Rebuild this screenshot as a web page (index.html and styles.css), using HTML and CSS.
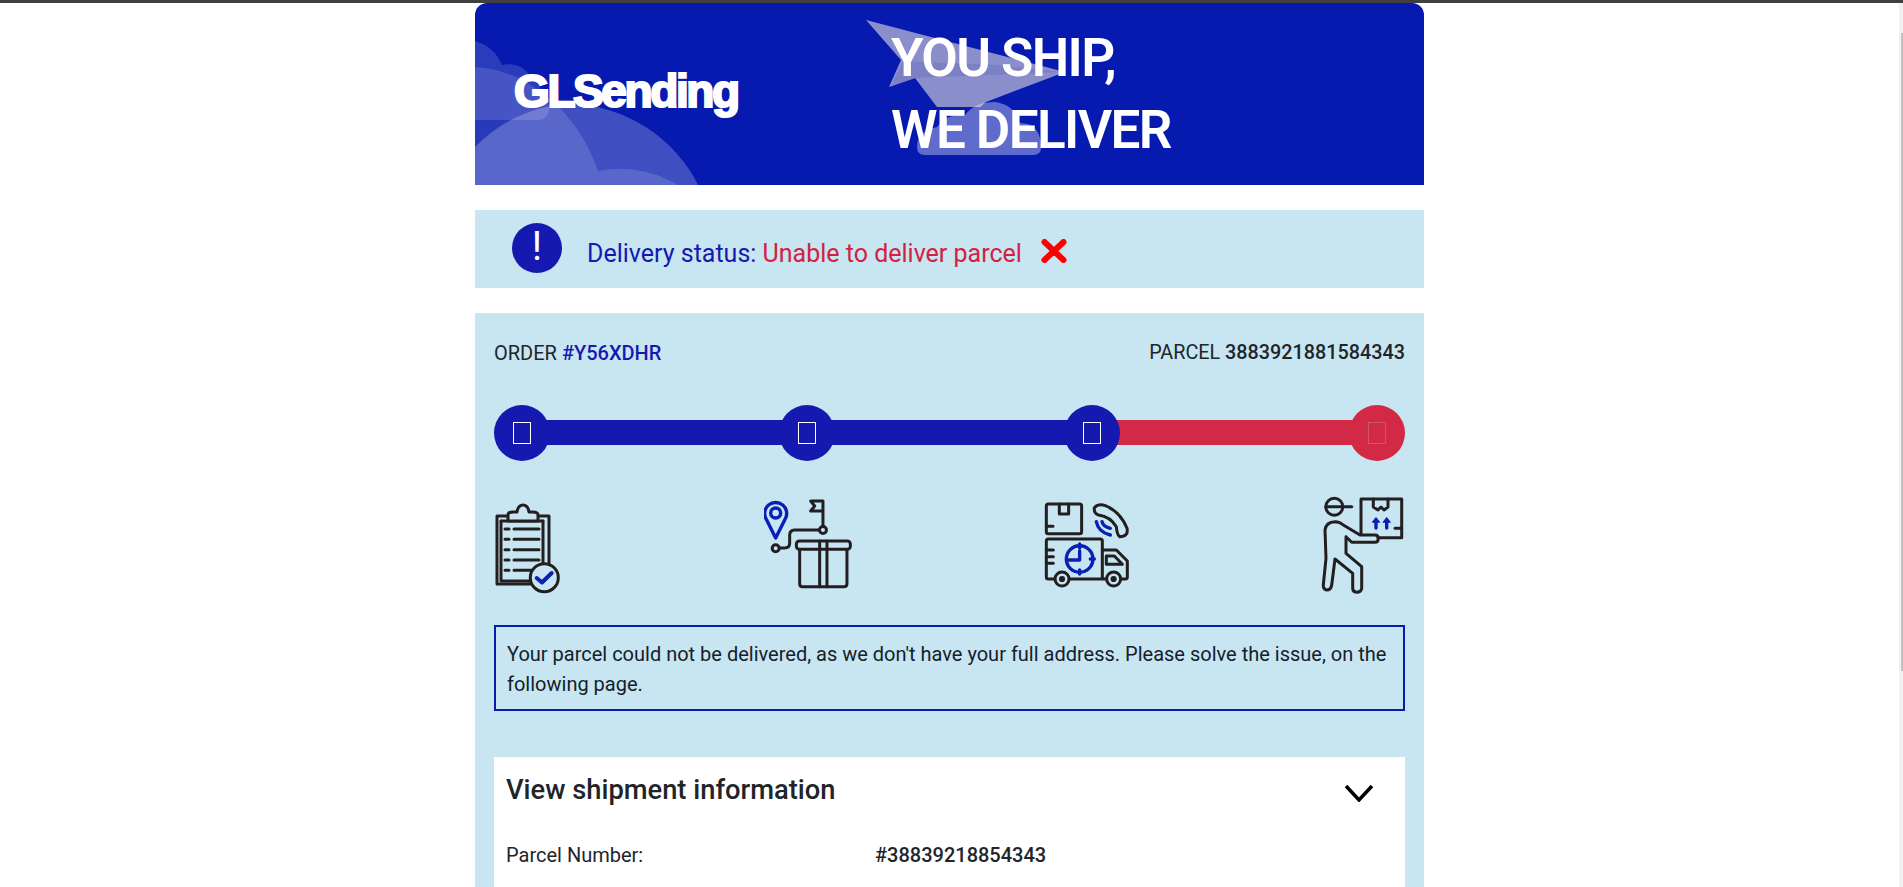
FILE: index.html
```html
<!DOCTYPE html>
<html lang="en">
<head>
<meta charset="utf-8">
<title>GLSending</title>
<link rel="stylesheet" href="styles.css">
</head>
<body>
<div class="topline"></div>
<main class="page">
  <header class="banner">
    <svg class="banner-art" viewBox="0 0 949 182" aria-hidden="true">
      <path class="cloud-a" d="M0 38C14 42 22 50 27 62C36 60 46 62 52 69C60 80 74 90 74 105Q74 117 62 117H0Z"/>
      <path class="cloud-b" d="M0 64C48 66 102 105 123 168C150 162 180 168 203 182H0Z"/>
      <path class="cloud-d" d="M0 144C25 118 60 102 95 101C150 102 200 135 223 182H0Z"/>
      <path class="plane" d="M391 17L590 69L511 99L505 104H462L440 75L414 84L426 57Z"/>
      <path class="plane-fold" d="M428 58L520 62L590 69L440 75L416 83Z"/>
      <path class="cloud-c" d="M450 152Q442 152 442 144Q442 128 462 124Q472 110 490 112Q500 99 520 99Q540 102 545 120Q566 120 566 145Q566 152 558 152Z"/>
    </svg>
    <div class="logo">GLSending</div>
    <h1 class="slogan">YOU SHIP,<br>WE DELIVER</h1>
  </header>

  <section class="status">
    <span class="alert">!</span>
    <p class="status-text">Delivery status: <span class="status-bad">Unable to deliver parcel</span></p>
    <svg class="cross" viewBox="0 0 26 24" aria-hidden="true"><path d="M3.5 3L22.5 21M22.5 3L3.5 21"/></svg>
  </section>

  <section class="panel">
    <div class="ids">
      <div>ORDER <b class="order-no">#Y56XDHR</b></div>
      <div class="parcel-id">PARCEL <b>3883921881584343</b></div>
    </div>

    <div class="track">
      <span class="node"><i class="tofu"></i></span>
      <span class="link"></span>
      <span class="node"><i class="tofu"></i></span>
      <span class="link"></span>
      <span class="node"><i class="tofu"></i></span>
      <span class="link link-bad"></span>
      <span class="node node-bad"><i class="tofu tofu-faint"></i></span>
    </div>

    <div class="icons">
      <svg viewBox="494 495 100 100" aria-hidden="true">
        <g class="ink">
          <rect x="497" y="516" width="52" height="68"/>
          <path d="M501 521V581H540"/><path d="M543 521V565"/><path d="M501 521H543"/>
          <path class="fill-panel" d="M508 521V515Q508 512 513 512H517Q518 505 523 505Q528 505 529 512H533Q538 512 538 515V521Z"/>
          <path d="M505 529H509M514 529H539M505 539.3H509M514 539.3H539M505 549.7H509M514 549.7H539M505 560H509M514 560H539M505 570.3H509M514 570.3H532"/>
          <circle class="fill-panel" cx="544.3" cy="577.7" r="14"/>
        </g>
        <path class="blue thick" d="M536.7 578L542 582.5L551.7 573"/>
      </svg>
      <svg viewBox="764.33 495 100 100" aria-hidden="true">
        <g class="blue">
          <path d="M776 538L766.5 519A11 11 0 1 1 785.5 519Z"/>
          <circle cx="776" cy="513" r="5"/>
        </g>
        <g class="ink">
          <circle cx="776" cy="548.3" r="3.5"/>
          <circle cx="823.3" cy="530" r="3.5"/>
          <path d="M780 548H785Q790 548 790 543V535Q790 530 795 530H819.5"/>
          <path d="M823.3 526.5V501H811L815 506L811 511H823.3"/>
          <rect x="796.7" y="541" width="54" height="8.3" rx="3"/>
          <path d="M800 549.3V584Q800 586.7 803 586.7H844Q847.3 586.7 847.3 584V549.3"/>
          <path d="M820 541V586.7M827.3 541V586.7"/>
        </g>
      </svg>
      <svg viewBox="1034.67 495 100 100" aria-hidden="true">
        <g class="ink">
          <rect x="1046" y="504" width="35.3" height="29.7" rx="2"/>
          <path d="M1059 504V514H1068.3V504M1046 526.3H1052.7"/>
          <path d="M1094 507.7Q1098.3 503.3 1105 505.7Q1120 511.7 1126.7 528.3Q1128.3 536.7 1119.3 536.7Q1116.7 535 1116 526.7Q1110 516.7 1098.3 515Q1093.3 513.3 1094 507.7Z"/>
          <path d="M1054.5 579H1048Q1046 579 1046 577V541Q1046 539 1048 539H1100Q1102 539 1102 541V579M1069 579H1106M1102 550H1116L1127 561V577Q1127 579 1125 579H1120.5"/>
          <path d="M1046 550H1053M1046 556.7H1053M1046 563.3H1053"/>
          <path d="M1106 556H1114L1122 564.3H1106Z"/>
          <circle cx="1061.7" cy="579" r="7"/><circle cx="1061.7" cy="579" r="1.6"/>
          <circle cx="1113.3" cy="579" r="7"/><circle cx="1113.3" cy="579" r="1.6"/>
        </g>
        <g class="blue">
          <circle cx="1079.3" cy="559" r="13.3"/>
          <path d="M1079.3 551V560H1068M1079.3 544V548M1079.3 570V574M1090 559H1094"/>
          <path d="M1096 521.7Q1098 532 1110 535M1101.7 521.7Q1103 527 1110 528.3"/>
        </g>
      </svg>
      <svg viewBox="1305 495 100 100" aria-hidden="true">
        <g class="ink">
          <circle cx="1334.3" cy="506.7" r="8.5"/>
          <path d="M1326 506.7H1351.7"/>
          <path d="M1361 533V499H1401.7V537.7H1378"/>
          <path d="M1373.3 499V507L1378 510L1381 507L1384 510L1388 507V499M1395 528.3H1401.7"/>
          <path d="M1325 530Q1326 522 1335 521.7Q1340 522 1343.3 525L1360 535H1375Q1378.3 535 1378.3 538.3Q1378.3 542.3 1375 542.3H1351.7L1346 536.7V553.3L1361.7 566.7V588.3Q1361 592.3 1356.7 592.3Q1352.7 592 1352.7 588.3V573.3L1335 559L1331.7 585Q1331 590 1326.7 590Q1323 589 1323.3 585L1326 558.3Z"/>
        </g>
        <g class="blue">
          <path d="M1376 521V528M1386.7 521V528"/>
          <path class="arrowhead" d="M1372.5 522L1376 517.5L1379.5 522ZM1383.2 522L1386.7 517.5L1390.2 522Z"/>
        </g>
      </svg>
    </div>

    <p class="notice">Your parcel could not be delivered, as we don't have your full address. Please solve the issue, on the following page.</p>

    <section class="details">
      <div class="details-head">
        <h2 class="details-title">View shipment information</h2>
        <svg class="chevron" viewBox="0 0 30 18" aria-hidden="true"><path d="M2 2L15 16L28 2"/></svg>
      </div>
      <dl class="row">
        <dt>Parcel Number:</dt>
        <dd>#38839218854343</dd>
      </dl>
    </section>
  </section>
</main>
<div class="scrollbar"><div class="scrollthumb"></div></div>
</body>
</html>
```
FILE: styles.css
```css
* { box-sizing: border-box; }
html, body { height: 100%; overflow: hidden; }
body { margin: 0; background: #fff; font-family: Roboto, "Liberation Sans", sans-serif; color: #212529; }
.topline { height: 3px; background: #3f3f3f; }
.page { width: 949px; margin-left: 475px; }

.banner { position: relative; display: flex; align-items: center; height: 182px; background: #061ab0; border-radius: 12px 12px 0 0; overflow: hidden; color: #fff; }
.banner-art { position: absolute; left: 0; top: 0; width: 949px; height: 182px; }
.cloud-a { fill: rgba(255,255,255,.145); }
.cloud-b { fill: rgba(255,255,255,.136); }
.cloud-d { fill: rgba(255,255,255,.233); }
.cloud-c { fill: rgba(255,255,255,.36); }
.plane { fill: #8a8fcc; }
.plane-fold { fill: #7c81c4; }
.logo { position: relative; width: 416px; padding-left: 39px; margin-top: -6px; font-family: "Liberation Sans", Arial, sans-serif; font-weight: 700; font-size: 46px; letter-spacing: -2.4px; -webkit-text-stroke: 2.2px #fff; }
.slogan { position: relative; margin: 0; font-size: 53px; font-weight: 600; line-height: 72px; letter-spacing: -1.6px; }

.status { display: flex; align-items: flex-start; height: 78px; margin-top: 25px; padding: 13px 0 0 37px; background: #c8e6f2; }
.alert { flex: none; width: 50px; height: 50px; border-radius: 50%; background: #1619b0; color: #fff; font-size: 40px; line-height: 48px; text-align: center; }
.status-text { margin: 13px 0 0 25px; font-size: 25px; line-height: 36px; color: #1619b0; }
.status-bad { color: #d4213f; }
.cross { flex: none; width: 26px; height: 24px; margin: 16px 0 0 19px; }
.cross path { fill: none; stroke: #fe0000; stroke-width: 6; stroke-linecap: round; }

.panel { margin-top: 25px; padding: 24px 19px 0; background: #c8e6f2; height: 600px; }
.ids { display: flex; justify-content: space-between; font-size: 20px; line-height: 32px; }
.ids b { font-weight: 500; }
.parcel-id { font-size: 19.8px; }
.order-no { color: #1619b0; }

.track { display: flex; align-items: flex-start; margin-top: 36px; }
.node { position: relative; z-index: 1; flex: none; display: flex; align-items: center; justify-content: center; width: 56px; height: 56px; border-radius: 50%; background: #1619b0; }
.node-bad { background: #d22947; }
.link { flex: 1; height: 25px; margin: 15px -8px 0; background: #1619b0; }
.link-bad { background: #d22947; }
.tofu { display: block; width: 18px; height: 22px; border: 1px solid #fff; }
.tofu-faint { border-color: #c9566c; }

.icons { display: flex; justify-content: space-between; margin-top: 34px; }
.icons svg { display: block; width: 100px; height: 100px; }
.ink path, .ink rect, .ink circle { fill: none; stroke: #231f20; stroke-width: 3; stroke-linecap: round; stroke-linejoin: round; }
.ink .fill-panel { fill: #c8e6f2; }
.blue path, .blue circle, .blue.thick { fill: none; stroke: #0a1fb5; stroke-width: 3.4; stroke-linecap: round; stroke-linejoin: round; }
.blue.thick { stroke-width: 4; }
.blue .arrowhead { fill: #0a1fb5; stroke-width: 1; }

.notice { margin: 30px 0 0; height: 86px; padding: 12px 11px 0; border: 2px solid #061bb0; font-size: 20px; line-height: 30px; color: #14212b; }

.details { margin-top: 46px; background: #fff; padding: 0 12px; height: 300px; }
.details-head { display: flex; justify-content: space-between; align-items: center; height: 66px; padding-right: 19px; }
.details-title { margin: 0; font-size: 27.3px; font-weight: 500; line-height: 66px; }
.chevron { width: 30px; height: 18px; margin-top: 5px; }
.chevron path { fill: none; stroke: #000; stroke-width: 3.5; }
.row { display: flex; margin: 17px 0 0; font-size: 20px; line-height: 30px; }
.row dt { width: 369px; }
.row dd { margin: 0; font-weight: 500; }

.scrollbar { position: fixed; right: 0; top: 3px; bottom: 0; width: 4px; background: #f1f1f1; }
.scrollthumb { position: absolute; right: 0; top: 30px; width: 2px; height: 638px; background: #c1c1c1; }
```
